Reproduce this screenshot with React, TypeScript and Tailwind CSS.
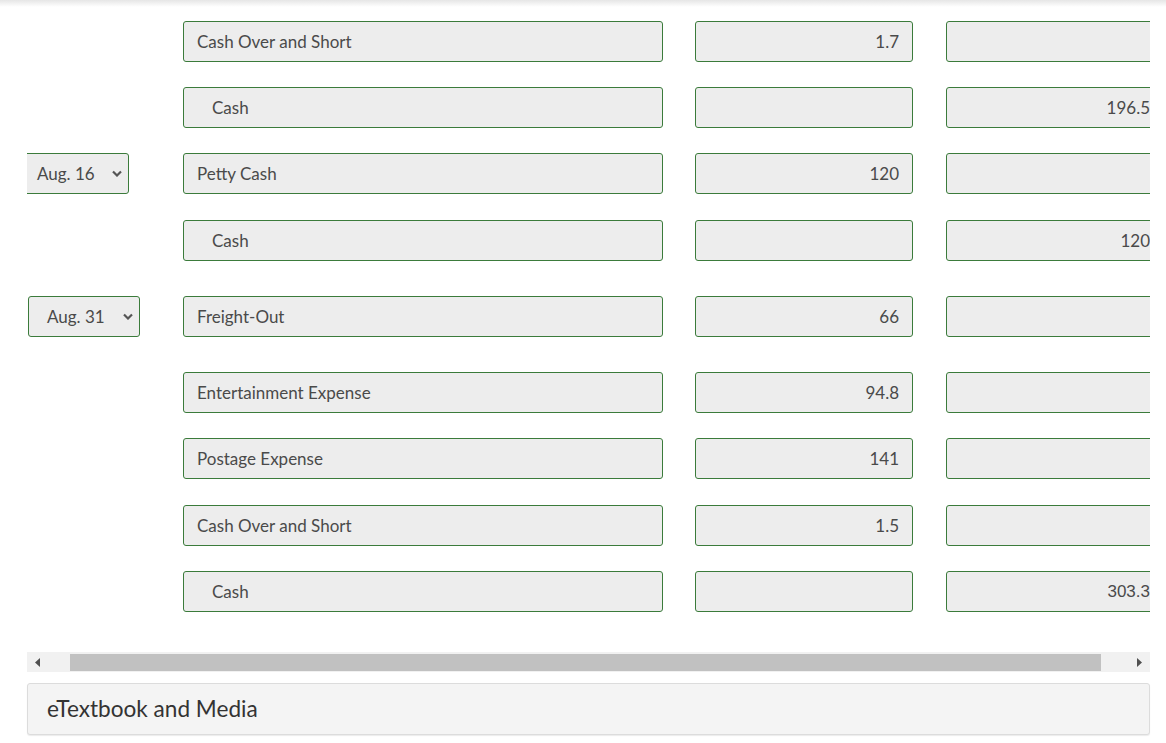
type Row = {
  date?: string;
  dateShift?: boolean;
  account: string;
  indent?: boolean;
  debit?: string;
  credit?: string;
  creditArial?: boolean;
  mt: string;
};

const rows: Row[] = [
  { account: "Cash Over and Short", debit: "1.7", mt: "mt-[21px]" },
  { account: "Cash", indent: true, credit: "196.5", mt: "mt-[25px]" },
  { date: "Aug. 16", dateShift: true, account: "Petty Cash", debit: "120", mt: "mt-[25px]" },
  { account: "Cash", indent: true, credit: "120", mt: "mt-[26px]" },
  { date: "Aug. 31", account: "Freight-Out", debit: "66", mt: "mt-[35px]" },
  { account: "Entertainment Expense", debit: "94.8", mt: "mt-[35px]" },
  { account: "Postage Expense", debit: "141", mt: "mt-[25px]" },
  { account: "Cash Over and Short", debit: "1.5", mt: "mt-[26px]" },
  { account: "Cash", indent: true, credit: "303.3", creditArial: true, mt: "mt-[25px]" },
];

const box = "h-[41px] shrink-0 rounded-[3px] border border-[#3b7b3b] bg-[#ededed] flex items-center text-[17px] text-[#4a4a4a]";

export default function App() {
  return (
    <div className="relative h-[743px] w-[1166px] overflow-hidden bg-white font-['Lato','Noto_Sans',sans-serif]">
      <div className="pointer-events-none absolute inset-x-0 top-0 h-[7px] bg-gradient-to-b from-[#e6e6e6] to-white" />

      <div className="ml-[27px] w-[1123px] overflow-hidden">
        {rows.map((row, i) => (
          <div key={i} className={`flex items-center ${row.mt}`}>
            <div className="w-[156px] shrink-0">
              {row.date ? <DateSelect label={row.date} shift={row.dateShift} /> : null}
            </div>
            <div className={`${box} w-[480px] ${row.indent ? "pl-[28px]" : "pl-[13px]"}`}>{row.account}</div>
            <div className={`${box} ml-[32px] w-[218px] justify-end pr-[13px]`}>{row.debit}</div>
            <div
              className={`${box} ml-[33px] w-[218px] justify-end pr-[13px] ${
                row.creditArial ? "font-['Liberation_Sans',sans-serif]" : ""
              }`}
            >
              {row.credit}
            </div>
          </div>
        ))}
      </div>

      <div className="ml-[27px] mt-[40px] flex h-[20px] w-[1123px] items-center bg-[#f1f1f1]">
        <div className="w-[43px] pl-[8px]">
          <svg width="5" height="9" viewBox="0 0 5 9" className="block">
            <path d="M5 0 L0 4.5 L5 9 Z" fill="#505050" />
          </svg>
        </div>
        <div className="h-[17px] w-[1031px] bg-[#c1c1c1]" />
        <div className="flex-1 pl-[36px]">
          <svg width="5" height="9" viewBox="0 0 5 9" className="block">
            <path d="M0 0 L5 4.5 L0 9 Z" fill="#505050" />
          </svg>
        </div>
      </div>

      <div className="ml-[27px] mt-[11px] flex h-[52px] w-[1123px] items-center rounded-[3px] border border-[#dcdcdc] bg-[#f4f4f4] pl-[19px] text-[22.6px] text-[#333333] shadow-[0_1px_1px_rgba(0,0,0,0.08)]">
        eTextbook and Media
      </div>
    </div>
  );
}

function DateSelect({ label, shift }: { label: string; shift?: boolean }) {
  return (
    <div
      className={`flex h-[41px] w-[112px] items-center justify-between rounded-[3px] border border-[#3b7b3b] bg-[#ededed] pr-[6px] text-[17px] text-[#4a4a4a] ${
        shift ? "-ml-[10px] pl-[19px]" : "ml-[1px] pl-[18px]"
      }`}
    >
      <span>{label}</span>
      <svg width="10" height="7" viewBox="0 0 10 7" className="block">
        <path d="M1 1.5 L5 5.5 L9 1.5" fill="none" stroke="#555555" strokeWidth="2.2" />
      </svg>
    </div>
  );
}
